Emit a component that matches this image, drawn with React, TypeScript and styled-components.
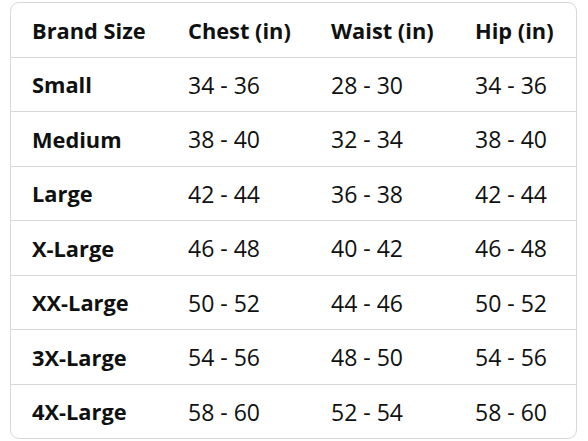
import React from 'react';
import styled, { createGlobalStyle } from 'styled-components';

const GlobalStyle = createGlobalStyle`
    html, body {
        margin: 0;
        padding: 0;
        background: #ffffff;
    }
    body {
        font-family: 'Open Sans', 'Noto Sans', Arial, sans-serif;
        color: #0f1111;
    }
`;

const headers = ['Brand Size', 'Chest (in)', 'Waist (in)', 'Hip (in)'];

const rows = [
    ['Small', '34 - 36', '28 - 30', '34 - 36'],
    ['Medium', '38 - 40', '32 - 34', '38 - 40'],
    ['Large', '42 - 44', '36 - 38', '42 - 44'],
    ['X-Large', '46 - 48', '40 - 42', '46 - 48'],
    ['XX-Large', '50 - 52', '44 - 46', '50 - 52'],
    ['3X-Large', '54 - 56', '48 - 50', '54 - 56'],
    ['4X-Large', '58 - 60', '52 - 54', '58 - 60'],
];

export default function App() {
    return (
        <Page>
            <GlobalStyle />
            <SizeTable>
                <HeadRow>
                    {headers.map((h) => (
                        <Cell key={h} bold>
                            {h}
                        </Cell>
                    ))}
                </HeadRow>
                {rows.map((r) => (
                    <BodyRow key={r[0]}>
                        {r.map((c, i) => (
                            <Cell key={i} bold={i === 0}>
                                {c}
                            </Cell>
                        ))}
                    </BodyRow>
                ))}
            </SizeTable>
        </Page>
    );
}

const Page = styled.div`
    width: 588px;
    height: 441px;
    padding: 2px 11px 2px 10px;
    box-sizing: border-box;
`;
const SizeTable = styled.div`
    display: flex;
    flex-direction: column;
    height: 437px;
    border: 1px solid #d5d9d9;
    border-radius: 9px;
    box-sizing: border-box;
    overflow: hidden;
`;
const HeadRow = styled.div`
    display: grid;
    grid-template-columns: 156px 143px 144px 1fr;
    flex: 1;
    align-items: center;
`;
const BodyRow = styled(HeadRow)`
    border-top: 1px solid #d5d9d9;
`;
const Cell = styled.div<{ bold?: boolean }>`
    padding-left: 21px;
    padding-top: 1px;
    font-size: ${(p) => (p.bold ? '21.8px' : '23px')};
    font-weight: ${(p) => (p.bold ? 700 : 400)};
    white-space: nowrap;
`;
